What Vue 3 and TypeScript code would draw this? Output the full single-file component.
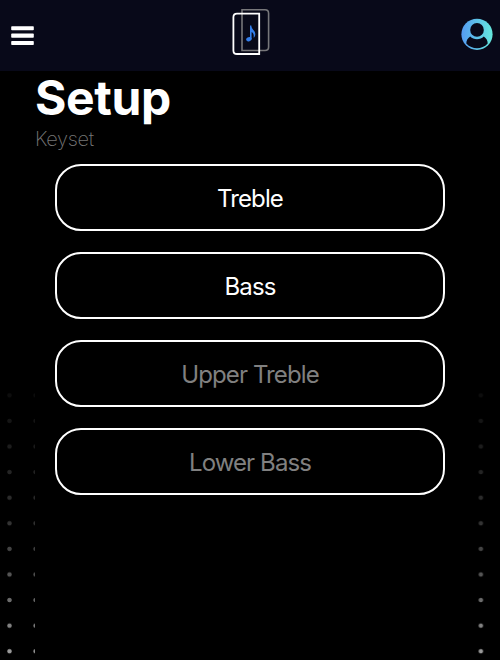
<script setup lang="ts">
interface Keyset {
  name: string
  available: boolean
}

const keysets: Keyset[] = [
  { name: 'Treble', available: true },
  { name: 'Bass', available: true },
  { name: 'Upper Treble', available: false },
  { name: 'Lower Bass', available: false },
]
</script>

<template>
  <div class="page">
    <header class="topbar">
      <button class="icon-button menu" aria-label="Menu">
        <svg width="23" height="20" viewBox="0 0 23 20">
          <g fill="#fff">
            <rect x="0.2" y="0.2" width="22.6" height="4.1" rx="0.8" />
            <rect x="0.2" y="7.6" width="22.6" height="4.1" rx="0.8" />
            <rect x="0.2" y="15" width="22.6" height="4.1" rx="0.8" />
          </g>
        </svg>
      </button>
      <svg class="logo" width="38" height="48" viewBox="0 0 38 48">
        <path d="M10 1.8H33Q36.6 1.8 36.6 5.4V39Q36.6 42.5 33 42.5H10Z" fill="none" stroke="#77777a" stroke-width="1.6" />
        <path d="M27.2 5.6H5Q1.4 5.6 1.4 9.2V42.4Q1.4 46 5 46H27.2Z" fill="none" stroke="#fff" stroke-width="1.8" />
        <ellipse cx="16.9" cy="31.2" rx="2.8" ry="2.1" transform="rotate(-18 16.9 31.2)" fill="#347eea" />
        <path d="M18 17.5H19.3C19.5 21.5 23.3 22.3 23.3 26.2C23.3 27.8 22.7 29 21.6 29.8C22.2 26.5 21.2 24.8 19.6 24.1V31H18Z" fill="#347eea" />
      </svg>
      <button class="icon-button account" aria-label="Account">
        <svg width="32" height="32" viewBox="0 0 32 32">
          <defs>
            <linearGradient id="account-fill" x1="0" x2="1" y1="0" y2="0">
              <stop offset="0" stop-color="#559bf3" />
              <stop offset="1" stop-color="#65e8dc" />
            </linearGradient>
          </defs>
          <circle cx="16" cy="16.3" r="15.6" fill="url(#account-fill)" />
          <path d="M9.2 18.4C11 20.2 13.3 21.2 16 21.2S21 20.2 22.8 18.4C25.4 20 26.7 22.6 26.7 25.5C23.7 28.8 20 30.2 16 30.2S8.3 28.8 5.3 25.5C5.3 22.6 6.6 20 9.2 18.4Z" fill="#080919" />
          <circle cx="16" cy="11.9" r="6.8" fill="#080919" />
        </svg>
      </button>
    </header>
    <div class="backdrop">
      <main class="panel">
        <h1>Setup</h1>
        <p class="subtitle">Keyset</p>
        <div class="options">
          <button
            v-for="keyset in keysets"
            :key="keyset.name"
            class="option"
            :class="{ unavailable: !keyset.available }"
          >
            {{ keyset.name }}
          </button>
        </div>
      </main>
    </div>
  </div>
</template>

<style>
body {
  background: #000;
}
</style>

<style scoped>
.page {
  display: flex;
  flex-direction: column;
  height: 660px;
  overflow: hidden;
  background: #000;
  color: #fff;
  font-family: Inter, "Liberation Sans", sans-serif;
}

.topbar {
  display: grid;
  grid-template-columns: 1fr auto 1fr;
  flex: none;
  box-sizing: border-box;
  height: 71px;
  padding: 0 7px 0 11px;
  background: #080919;
}

.icon-button {
  display: flex;
  padding: 0;
  border: 0;
  background: none;
}

.menu {
  justify-self: start;
  align-self: start;
  margin-top: 26px;
}

.logo {
  margin: 8px 0 0 -2px;
}

.account {
  justify-self: end;
  align-self: start;
  margin-top: 18px;
}

.backdrop {
  position: relative;
  flex: 1;
  padding: 0 35px;
}

.backdrop::before {
  content: "";
  position: absolute;
  inset: 0;
  background-image: radial-gradient(circle, #fff 1.8px, transparent 2.6px);
  background-size: 26.2px 25.6px;
  background-position: -3.6px 4.4px;
  mask-image: linear-gradient(
    transparent 300px,
    rgba(0, 0, 0, 0.05) 324px,
    rgba(0, 0, 0, 0.2) 452px,
    rgba(0, 0, 0, 0.33) 503px,
    rgba(0, 0, 0, 0.6) 580px
  );
}

.panel {
  position: relative;
  box-sizing: border-box;
  height: 100%;
  background: #000;
}

h1 {
  margin: 0;
  font-size: 48px;
  font-weight: 700;
  line-height: 54px;
  letter-spacing: -0.4px;
}

.subtitle {
  margin: 0;
  color: #777;
  font-size: 20px;
  font-weight: 200;
  line-height: 28px;
  letter-spacing: -0.35px;
}

.options {
  display: flex;
  flex-direction: column;
  gap: 21px;
  padding: 11px 20px 0;
}

.option {
  box-sizing: border-box;
  height: 67px;
  padding: 2px 0 0;
  border: 2px solid #fff;
  border-radius: 26px;
  background: #000;
  color: #fff;
  font: 400 24px/28px Inter, "Liberation Sans", sans-serif;
  letter-spacing: -0.9px;
}

.unavailable {
  color: #808080;
}
</style>
